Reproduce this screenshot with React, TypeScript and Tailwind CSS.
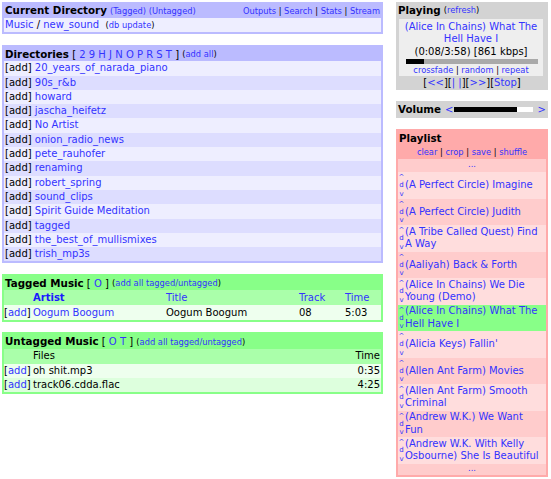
import React from "react";

const dirs = [
  "20_years_of_narada_piano",
  "90s_r&b",
  "howard",
  "jascha_heifetz",
  "No Artist",
  "onion_radio_news",
  "pete_rauhofer",
  "renaming",
  "robert_spring",
  "sound_clips",
  "Spirit Guide Meditation",
  "tagged",
  "the_best_of_mullismixes",
  "trish_mp3s",
];

const letters = ["2", "9", "H", "J", "N", "O", "P", "R", "S", "T"];

const songs = [
  "(A Perfect Circle) Imagine",
  "(A Perfect Circle) Judith",
  "(A Tribe Called Quest) Find A Way",
  "(Aaliyah) Back & Forth",
  "(Alice In Chains) We Die Young (Demo)",
  "(Alice In Chains) What The Hell Have I",
  "(Alicia Keys) Fallin'",
  "(Allen Ant Farm) Movies",
  "(Allen Ant Farm) Smooth Criminal",
  "(Andrew W.K.) We Want Fun",
  "(Andrew W.K. With Kelly Osbourne) She Is Beautiful",
];

function Sep() {
  return <span className="text-black"> | </span>;
}

export default function App() {
  return (
    <div className="w-[551px] h-[479px] overflow-hidden bg-white font-['DejaVu_Sans',sans-serif] text-black flex gap-[13px] pl-[2px] pt-[2px]">
      {/* Left column */}
      <div className="w-[381px] flex flex-col">
        {/* Current Directory */}
        <div className="border-2 border-[#bbbbff]">
          <div className="bg-[#bbbbff] h-[14.3px] flex items-center justify-between pl-[1px] pr-[1px]">
            <div className="flex items-baseline gap-[3px]">
              <span className="font-bold text-[10.3px]">Current Directory</span>
              <span className="text-[8.3px] text-[#3333ff]">(Tagged) (Untagged)</span>
            </div>
            <div className="text-[8.3px] text-[#3333ff]">
              Outputs<Sep />Search<Sep />Stats<Sep />Stream
            </div>
          </div>
          <div className="bg-[#eeeeff] h-[14px] leading-[14px] text-[10px] pl-[1px] whitespace-pre">
            <span className="text-[#3333ff]">Music</span> / <span className="text-[#3333ff]">new_sound</span>{"  "}
            <span className="text-[8.3px]">
              (<span className="text-[#3333ff]">db update</span>)
            </span>
          </div>
        </div>

        {/* Directories */}
        <div className="mt-[11px] border-2 border-[#bbbbff]">
          <div className="bg-[#bbbbff] h-[14px] flex items-center pl-[1px] whitespace-pre">
            <span className="font-bold text-[10.3px]">Directories</span>
            <span className="text-[10px]">
              {" [ "}
              {letters.map((l) => (
                <React.Fragment key={l}>
                  <span className="text-[#3333ff]">{l}</span>{" "}
                </React.Fragment>
              ))}
              {"] "}
            </span>
            <span className="text-[8.3px]">
              (<span className="text-[#3333ff]">add all</span>)
            </span>
          </div>
          {dirs.map((d, i) => (
            <div
              key={d}
              className={`h-[14.3px] leading-[14.3px] text-[10px] pl-[1px] whitespace-pre ${
                i % 2 === 0 ? "bg-[#eeeeff]" : "bg-[#ddddff]"
              }`}
            >
              [add] <span className="text-[#3333ff]">{d}</span>
            </div>
          ))}
        </div>

        {/* Tagged Music */}
        <div className="mt-[11px] border-2 border-[#88ff88]">
          <div className="bg-[#88ff88] h-[14px] flex items-center pl-[1px] whitespace-pre">
            <span className="font-bold text-[10.3px]">Tagged Music</span>
            <span className="text-[10px]">
              {" [ "}
              <span className="text-[#3333ff]">O</span>
              {" ] "}
            </span>
            <span className="text-[8.3px]">
              (<span className="text-[#3333ff]">add all tagged/untagged</span>)
            </span>
          </div>
          <div className="bg-[#aaffaa] h-[15px] leading-[15px] text-[10px] grid grid-cols-[29px_133px_133px_46px_1fr] text-[#3333ff]">
            <div />
            <div className="font-bold text-[#1a1aff]">Artist</div>
            <div>Title</div>
            <div>Track</div>
            <div>Time</div>
          </div>
          <div className="bg-[#eeffee] h-[15px] leading-[15px] text-[10px] grid grid-cols-[29px_133px_133px_46px_1fr]">
            <div className="whitespace-pre">
              [<span className="text-[#3333ff]">add</span>]
            </div>
            <div className="text-[#3333ff]">Oogum Boogum</div>
            <div>Oogum Boogum</div>
            <div>08</div>
            <div>5:03</div>
          </div>
        </div>

        {/* Untagged Music */}
        <div className="mt-[10px] border-2 border-[#88ff88]">
          <div className="bg-[#88ff88] h-[15px] flex items-center pl-[1px] whitespace-pre">
            <span className="font-bold text-[10.3px]">Untagged Music</span>
            <span className="text-[10px]">
              {" [ "}
              <span className="text-[#3333ff]">O</span> <span className="text-[#3333ff]">T</span>
              {" ] "}
            </span>
            <span className="text-[8.3px]">
              (<span className="text-[#3333ff]">add all tagged/untagged</span>)
            </span>
          </div>
          <div className="bg-[#aaffaa] h-[14.3px] leading-[14.3px] text-[10px] grid grid-cols-[29px_1fr_auto]">
            <div />
            <div>Files</div>
            <div className="pr-[1px]">Time</div>
          </div>
          {[
            ["oh shit.mp3", "0:35"],
            ["track06.cdda.flac", "4:25"],
          ].map(([f, t], i) => (
            <div
              key={f}
              className={`h-[14px] leading-[14px] text-[10px] grid grid-cols-[29px_1fr_auto] ${
                i === 0 ? "bg-[#eeffee]" : "bg-[#ddffdd]"
              }`}
            >
              <div className="whitespace-pre">
                [<span className="text-[#3333ff]">add</span>]
              </div>
              <div>{f}</div>
              <div className="pr-[1px]">{t}</div>
            </div>
          ))}
        </div>
      </div>

      {/* Right column */}
      <div className="w-[152px] flex flex-col">
        {/* Playing */}
        <div className="bg-[#d3d3d3]">
          <div className="h-[17px] flex items-center pl-[2px]">
            <span className="font-bold text-[10.3px]">Playing</span>
            <span className="ml-[3px] text-[8.3px]">
              (<span className="text-[#3333ff]">refresh</span>)
            </span>
          </div>
          <div className="bg-[#eeeeee] ml-[3px] mr-[5px] pt-[1.5px] text-center">
            <div className="text-[10px] leading-[12.5px] text-[#3333ff]">(Alice In Chains) What The Hell Have I</div>
            <div className="text-[10px] leading-[12.5px]">(0:08/3:58) [861 kbps]</div>
            <div className="ml-[7px] mr-[5px] my-[1px] h-[5px] bg-[#a9a9a9]">
              <div className="h-full w-[18px] bg-black" />
            </div>
            <div className="text-[8.3px] leading-[11px] text-[#3333ff]">
              crossfade<Sep />random<Sep />repeat
            </div>
          </div>
          <div className="h-[14px] leading-[14px] text-center text-[10px] whitespace-pre">
            [<span className="text-[#3333ff]">&lt;&lt;</span>][<span className="text-[#3333ff]">| |</span>][
            <span className="text-[#3333ff]">&gt;&gt;</span>][<span className="text-[#3333ff]">Stop</span>]
          </div>
        </div>

        {/* Volume */}
        <div className="mt-[11px] bg-[#d3d3d3] h-[17px] flex items-center pl-[2px]">
          <span className="font-bold text-[10.3px]">Volume</span>
          <span className="ml-[4px] text-[10px] text-[#3333ff]">&lt;</span>
          <div className="ml-[1px] w-[79px] h-[5px] bg-white flex">
            <div className="w-[63px] h-full bg-black" />
          </div>
          <span className="ml-[4px] text-[10px] text-[#3333ff]">&gt;</span>
        </div>

        {/* Playlist */}
        <div className="mt-[11px] border-2 border-[#ffaaaa]">
          <div className="bg-[#ffaaaa]">
            <div className="h-[15px] leading-[15px] pl-[1px] font-bold text-[10.3px]">Playlist</div>
            <div className="h-[13px] leading-[13px] text-center text-[8.3px] text-[#3333ff]">
              clear<Sep />crop<Sep />save<Sep />shuffle
            </div>
          </div>
          <div className="h-[13px] leading-[11px] text-center text-[8.3px] text-[#3333ff] bg-[#ffcccc]">...</div>
          {songs.map((s, i) => {
            const current = i === 5;
            const bg = current ? "bg-[#88ff88]" : i % 2 === 0 ? "bg-[#ffdddd]" : "bg-[#ffcccc]";
            return (
              <div key={s} className={`h-[26.5px] flex ${bg}`}>
                <div className="w-[7px] flex flex-col justify-between items-center text-[7px] leading-[8px] text-[#3333ff] py-[1px]">
                  <span>^</span>
                  <span>d</span>
                  <span>v</span>
                </div>
                <div className="flex-1 pr-[3px] flex items-center text-[10px] leading-[12.5px] text-[#3333ff]">{s}</div>
              </div>
            );
          })}
          <div className="h-[11px] leading-[9px] text-center text-[8.3px] text-[#3333ff] bg-[#ffcccc]">...</div>
        </div>
      </div>
    </div>
  );
}
